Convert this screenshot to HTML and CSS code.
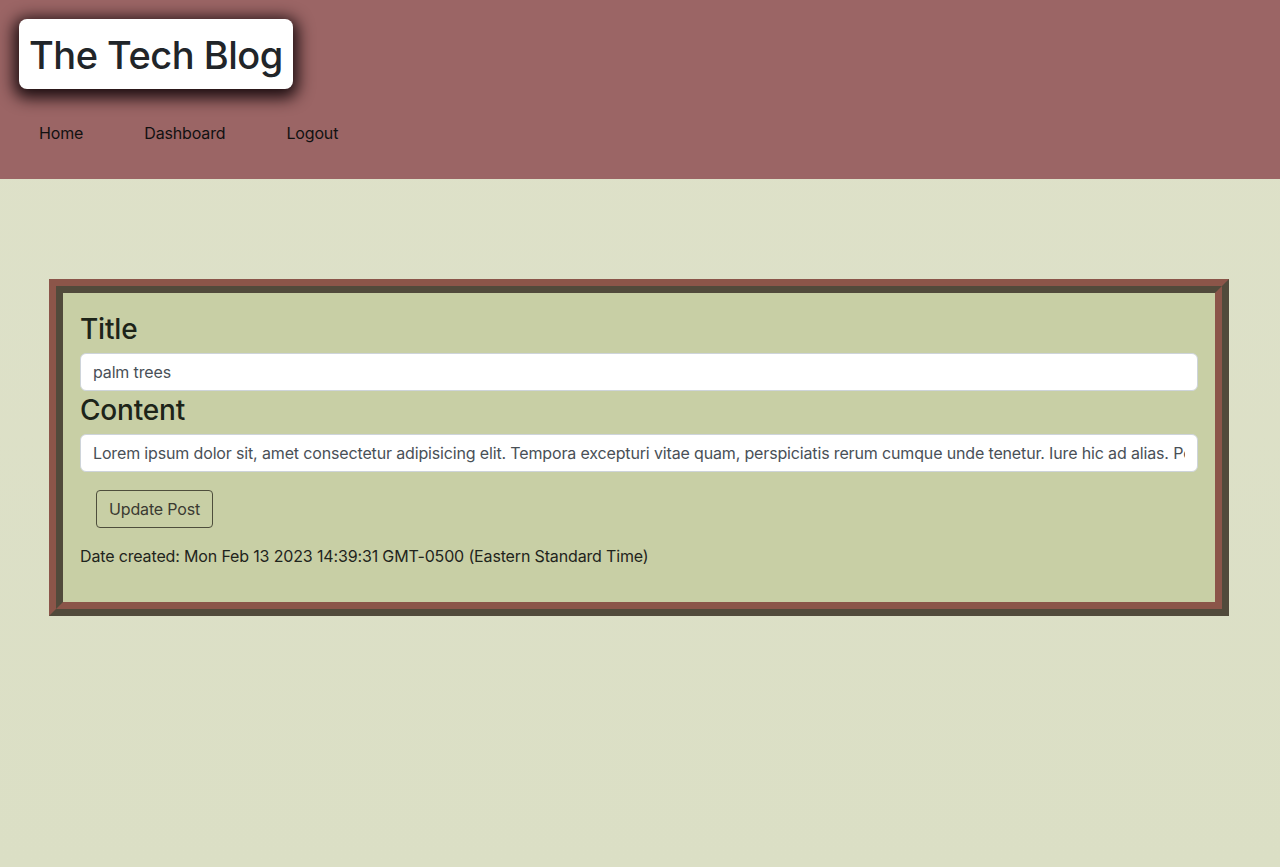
FILE: index.html
```html
<!DOCTYPE html>
<html lang="en">
<head>
<meta charset="utf-8">
<title>The Tech Blog</title>
<link rel="stylesheet" href="styles.css">
</head>
<body>
<header class="site-header">
  <h1 class="brand">The Tech Blog</h1>
  <nav class="nav">
    <a href="#" class="nav-link">Home</a>
    <a href="#" class="nav-link">Dashboard</a>
    <a href="#" class="nav-link">Logout</a>
  </nav>
</header>
<main class="main">
  <section class="card">
    <div class="card-inner">
      <form class="post-form">
        <label class="field-label" for="title">Title</label>
        <input class="field" id="title" type="text" value="palm trees">
        <label class="field-label field-label-next" for="content">Content</label>
        <input class="field" id="content" type="text" value="Lorem ipsum dolor sit, amet consectetur adipisicing elit. Tempora excepturi vitae quam, perspiciatis rerum cumque unde tenetur. Iure hic ad alias. Porro voluptatibus">
        <button type="button" class="btn">Update Post</button>
      </form>
      <p class="date">Date created: Mon Feb 13 2023 14:39:31 GMT-0500 (Eastern Standard Time)</p>
    </div>
  </section>
</main>
</body>
</html>
```
FILE: styles.css
```css
* { box-sizing: border-box; }
html, body { margin: 0; padding: 0; }
body {
  font-family: Inter, "Noto Sans", "Liberation Sans", sans-serif;
  font-size: 16px;
  line-height: 1.5;
  letter-spacing: -0.15px;
  color: #212529;
  background: linear-gradient(#dee1c9, #dbdfc5);
  min-height: 867px;
}
.site-header {
  background: #9b6565;
  height: 179px;
  padding: 19px 19px 0;
}
.brand {
  display: inline-block;
  margin: 0;
  background: #fff;
  border-radius: 8px;
  padding: 12px 10px 10px;
  font-size: 38px;
  font-weight: 500;
  line-height: 48px;
  letter-spacing: -0.5px;
  color: #212529;
  box-shadow: 0 4px 16px 5px #1b0d10;
}
.nav {
  display: flex;
  gap: 61px;
  margin-top: 32px;
  padding-left: 20px;
}
.nav-link {
  color: #111;
  text-decoration: none;
  font-size: 16px;
  line-height: 24px;
}
.main {
  padding-top: 100px;
}
.card {
  width: 1180px;
  margin: 0 0 0 49px;
  border: 7px solid;
  border-color: #8b5549 #514a3b #514a3b #8b5549;
}
.card-inner {
  border: 7px solid;
  border-color: #514a3b #8b5549 #8b5549 #514a3b;
  background: #c8cfa5;
  padding: 19px 17px 16px;
}
.post-form {
  display: flex;
  flex-direction: column;
  align-items: flex-start;
}
.field-label {
  font-size: 28px;
  font-weight: 500;
  line-height: 34px;
  letter-spacing: -0.2px;
  color: #1d2419;
  margin-bottom: 7px;
}
.field-label-next {
  margin-top: 2px;
}
.field {
  width: 100%;
  height: 38px;
  border: 1px solid #ced4da;
  border-radius: 6px;
  background: #fff;
  padding: 6px 12px;
  font-family: inherit;
  font-size: 16px;
  letter-spacing: -0.15px;
  color: #495057;
}
.btn {
  margin: 18px 16px 0;
  height: 38px;
  padding: 6px 12px;
  border: 1px solid #4e4e3c;
  border-radius: 4px;
  background: transparent;
  font-family: inherit;
  font-size: 16px;
  letter-spacing: -0.15px;
  color: #3a3a32;
}
.date {
  margin: 16px 0 18px;
  color: #1f241c;
  line-height: 24px;
}
```
